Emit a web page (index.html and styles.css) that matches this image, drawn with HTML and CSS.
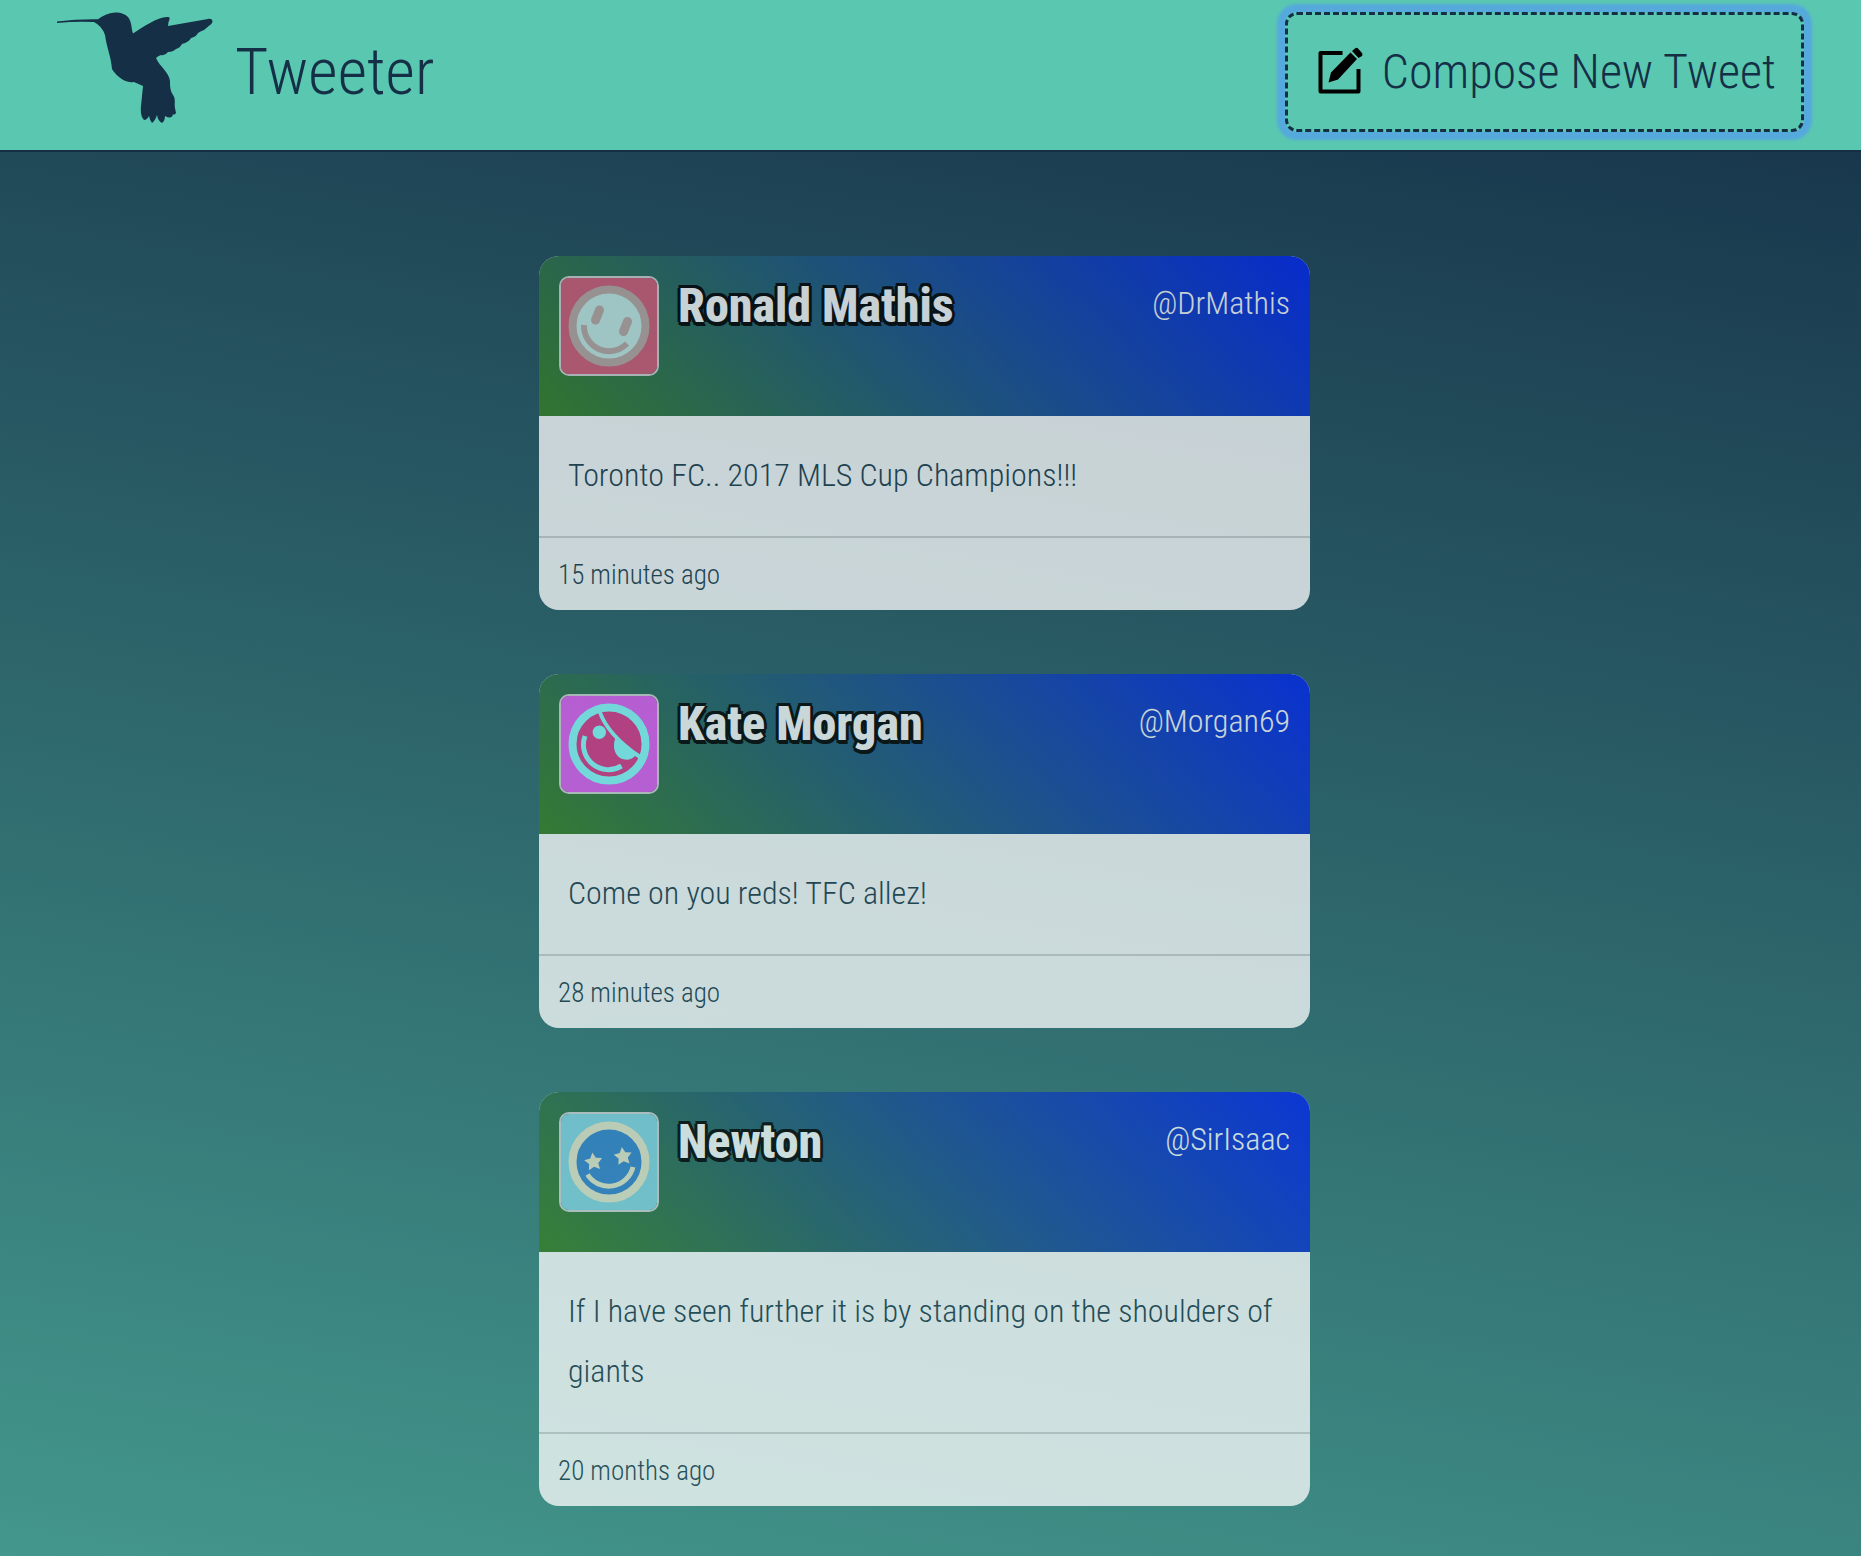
FILE: index.html
```html
<!DOCTYPE html>
<html lang="en">
<head>
<meta charset="utf-8">
<title>Tweeter</title>
<meta name="viewport" content="width=device-width, initial-scale=1">
<link rel="stylesheet" href="styles.css">
</head>
<body>
<header class="nav">
  <div class="brand">
    <svg class="logo" viewBox="0 0 156 112" aria-hidden="true">
      <path d="M0 9.500Q20 7 41 7.300Q48 1.500 58 0.500Q66 0 71 5C75 10 74 16 76 21.500C86 15 102 4 111 5Q114 5 111.500 10L111 14L151 7C156 6 157 10 153 13L147 18Q144 19 141 21Q139 25 134 26Q132 30 125 32Q123 36 119 37Q116 40 111 40Q108 44 104 43Q101 44 99 46C103 55 112 60 113 69C113 74 113 78 116 83C119 87 117 91 118 96L119 101Q117 104 116 102Q115 108 108 104Q108 109 105 111Q101 109 100 103Q98 109 95 111Q93 109 92 104Q90 108 87 108Q83 104 84 94L86 74L77 70C67 72 58 62 55 57C54 44 50 37 48 23Q45 14 37 10Q20 9 0 11Z"/>
    </svg>
    <h1 class="title">Tweeter</h1>
  </div>
  <button class="compose" type="button">
    <svg class="compose-icon" viewBox="0 0 48 48" aria-hidden="true">
      <path d="M25.500 6H3.500V44.500H41.500V22" fill="none" stroke="#000" stroke-width="4" stroke-linejoin="round"/>
      <path d="M11.500 35.500L14 25.500L33.500 5.500L40 12L21 32.500Z"/>
      <path d="M35 4L38 1.500Q39.500 0 41 1.500L45 6Q46 7.500 45 9L41.500 11Z"/>
    </svg>
    Compose New Tweet
  </button>
</header>
<main class="tweets">
  <article class="tweet">
    <header class="tweet-head">
      <svg class="avatar" viewBox="0 0 96 96" aria-hidden="true">
        <rect width="96" height="96" fill="#d65b76"/>
        <circle cx="48" cy="48" r="36.500" fill="#c8ece6" stroke="#bea9a4" stroke-width="8"/>
        <path d="M38.500 32L34.500 42M66.500 43.500L62.500 53.500" fill="none" stroke="#bea9a4" stroke-width="9" stroke-linecap="round"/>
        <path d="M23 47A25 25 0 0 0 66 65.500" fill="none" stroke="#bea9a4" stroke-width="6"/>
      </svg>
      <h2 class="name">Ronald Mathis</h2>
      <span class="handle">@DrMathis</span>
    </header>
    <p class="text">Toronto FC.. 2017 MLS Cup Champions!!!</p>
    <footer class="age">15 minutes ago</footer>
  </article>
  <article class="tweet">
    <header class="tweet-head">
      <svg class="avatar" viewBox="0 0 96 96" aria-hidden="true">
        <rect width="96" height="96" fill="#e45df5"/>
        <circle cx="48" cy="48" r="36.500" fill="#de3688" stroke="#8bffff" stroke-width="8"/>
        <circle cx="38.300" cy="36.300" r="6.700" fill="#8bffff"/>
        <path d="M38.500 15C44 32 60 48 79 61" fill="none" stroke="#8bffff" stroke-width="4"/>
        <path d="M55 41C51 49 53 58 59 62C65 65 71 64 75 59Z" fill="#8bffff"/>
        <path d="M24 40A25 25 0 0 0 60.500 70" fill="none" stroke="#8bffff" stroke-width="5"/>
      </svg>
      <h2 class="name">Kate Morgan</h2>
      <span class="handle">@Morgan69</span>
    </header>
    <p class="text">Come on you reds! TFC allez!</p>
    <footer class="age">28 minutes ago</footer>
  </article>
  <article class="tweet">
    <header class="tweet-head">
      <svg class="avatar" viewBox="0 0 96 96" aria-hidden="true">
        <rect width="96" height="96" fill="#84d5e4"/>
        <circle cx="48" cy="48" r="36.500" fill="#3384cf" stroke="#e6e8ca" stroke-width="8"/>
        <g fill="#e6e8ca">
          <path transform="translate(32.500 48) rotate(-7)" d="M0-9.500L2.800-3.900L9-2.900L4.600 1.500L5.600 7.700L0 4.800L-5.600 7.700L-4.600 1.500L-9-2.900L-2.800-3.900Z"/>
          <path transform="translate(62 42.500) rotate(-7)" d="M0-9.500L2.800-3.900L9-2.900L4.600 1.500L5.600 7.700L0 4.800L-5.600 7.700L-4.600 1.500L-9-2.900L-2.800-3.900Z"/>
        </g>
        <path d="M26.500 60.500A25 25 0 0 0 72 53" fill="none" stroke="#e6e8ca" stroke-width="5"/>
      </svg>
      <h2 class="name">Newton</h2>
      <span class="handle">@SirIsaac</span>
    </header>
    <p class="text">If I have seen further it is by standing on the shoulders of giants</p>
    <footer class="age">20 months ago</footer>
  </article>
</main>
</body>
</html>
```
FILE: styles.css
```css
* { box-sizing: border-box; }

body {
  margin: 0;
  min-height: 100vh;
  background: linear-gradient(10deg, #43978c, #152f47);
  font-family: "Roboto Condensed", "Liberation Sans Narrow", Roboto, sans-serif;
  font-weight: 300;
  color: #152f47;
}

.nav {
  display: flex;
  justify-content: space-between;
  align-items: flex-start;
  height: 152px;
  padding: 12px 57px 0;
  background: #5ac8b0;
  border-bottom: 2px solid #152f47;
}

.brand { display: flex; gap: 22px; }
.logo { width: 156px; height: 112px; fill: #152f47; }
.title { margin: 0; font-size: 64px; line-height: 122px; font-weight: 300; }

.compose {
  display: flex;
  align-items: center;
  gap: 17px;
  height: 120px;
  padding: 0 25px 2px 29px;
  background: transparent;
  border: 3px dashed #152f47;
  border-radius: 12px;
  box-shadow: 0 0 3px 8px #55a9dc;
  color: inherit;
  font: inherit;
  font-size: 48px;
}
.compose-icon { width: 48px; height: 48px; }

.tweets {
  display: flex;
  flex-direction: column;
  align-items: center;
  gap: 64px;
  padding: 104px 12px 50px 0;
}

.tweet {
  width: 771px;
  max-width: 100%;
  border-radius: 20px;
  overflow: hidden;
  background: #fff;
  opacity: .75;
  font-weight: 350;
}

.tweet-head {
  display: flex;
  height: 160px;
  padding: 20px;
  background: linear-gradient(45deg, #378020, #0024f5);
  color: #fff;
}
.avatar { width: 100px; height: 100px; border: 2px solid #d3d3d3; border-radius: 10px; }
.name {
  margin: 0 auto 0 19px;
  font-size: 48px;
  line-height: 60px;
  font-weight: 800;
  text-shadow:
    -3px 0 0 #000, 3px 0 0 #000, 0 -3px 0 #000, 0 4px 0 #000,
    -2px -3px 0 #000, 2px -3px 0 #000, -2px 3px 0 #000, 2px 4px 0 #000;
}
.handle { font-size: 32px; line-height: 54px; }

.text { margin: 0; padding: 29px 29px 31px; font-size: 32px; line-height: 60px; color: #1c3c4c; }
.age { height: 74px; padding: 0 19px; border-top: 2px solid #d3d3d3; font-size: 27px; line-height: 74px; color: #1c3c4c; }
```
